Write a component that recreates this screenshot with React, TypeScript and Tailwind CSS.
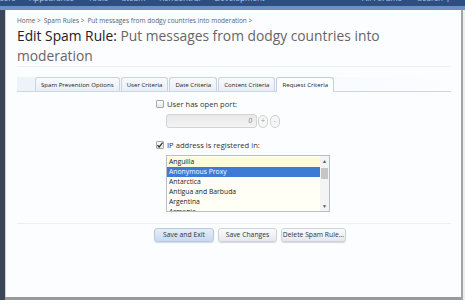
import { useState } from "react";

const navItems = ["Users", "Appearance", "Tools", "Steam", "XenCentral", "Development"];
const tabs = ["Spam Prevention Options", "User Criteria", "Date Criteria", "Content Criteria", "Request Criteria"];
const countries = ["Anguilla", "Anonymous Proxy", "Antarctica", "Antigua and Barbuda", "Argentina", "Armenia"];

export default function App() {
    const [selected, setSelected] = useState("Anonymous Proxy");

    return (
        <div className="flex h-[300px] w-[465px] flex-col overflow-hidden bg-[#e9ebee] font-['Open_Sans',sans-serif]">
            {/* admin header, mostly hidden behind the overlay */}
            <div className="h-[6px] overflow-hidden bg-[#2d4e80]">
                <div className="-mt-[7px] flex items-center text-[8px] leading-[10px] text-[#b9c8e0]">
                    <div className="-ml-[6px] flex gap-[14px]">
                        {navItems.map((item) => (
                            <span key={item}>{item}</span>
                        ))}
                    </div>
                    <div className="ml-auto mr-[14px] flex gap-[16px]">
                        <span>All Forums</span>
                        <span>Search ⚲</span>
                    </div>
                </div>
            </div>
            <div className="h-[4px] bg-[#6e90c4]" />

            <div className="flex min-h-0 flex-1">
                <div className="w-[5px] bg-[#3a4557]" />

                <div className="flex w-[456px] flex-col">
                    <div className="flex h-[287px] flex-col border-l border-[#cdd2da] bg-[#fcfdff] pl-[11px] pr-[10px]">
                        <div className="mt-[6px] flex gap-[3px] text-[6.5px] leading-[9px] text-[#5a6270]">
                            <span>Home &gt;</span>
                            <span>Spam Rules &gt;</span>
                            <span>Put messages from dodgy countries into moderation &gt;</span>
                        </div>
                        <h1 className="mt-[1px] text-[13.8px] leading-[20px] text-[#666]">
                            <span className="text-[#222]">Edit Spam Rule:</span> Put messages from dodgy countries into moderation
                        </h1>
                        <div className="h-px bg-[#eceef2]" />

                        {/* tab strip */}
                        <div className="mt-[10px] flex border-b border-[#cbd6e4] bg-gradient-to-r from-[#eef3fa] to-transparent pl-[18px]">
                            {tabs.map((tab) => {
                                const active = tab === "Request Criteria";
                                return (
                                    <div
                                        key={tab}
                                        className={
                                            active
                                                ? "-mb-px mr-px rounded-t-[3px] border border-b-0 border-[#c3cfdf] bg-[#fcfdff] px-[5px] text-[6.1px] leading-[13px] text-[#222]"
                                                : "mr-px rounded-t-[3px] border border-b-0 border-[#c9d4e2] bg-gradient-to-b from-[#f8fafd] to-[#e9eef6] px-[5px] text-[6.1px] leading-[13px] text-[#222]"
                                        }
                                    >
                                        {tab}
                                    </div>
                                );
                            })}
                        </div>

                        {/* form */}
                        <div className="ml-[139px] mt-[6px] flex flex-col text-[#333]">
                            <label className="flex items-center gap-[2px] text-[7.6px] leading-[12px]">
                                <span className="h-[8px] w-[8px] rounded-[1px] border border-[#a8a8a8] bg-gradient-to-b from-[#fff] to-[#e6e6e6]" />
                                <span className="ml-[1px]">User has open port:</span>
                            </label>
                            <div className="ml-[10px] mt-[4px] flex items-center gap-[1px]">
                                <div className="flex h-[14px] w-[91px] items-center justify-end rounded-[3px] border border-[#d3d3d3] bg-gradient-to-b from-[#e8e8e8] to-[#f4f4f4] pr-[4px] text-[7px] italic text-[#888]">
                                    0
                                </div>
                                <div className="flex h-[13px] w-[10px] items-center justify-center rounded-[5px] border border-[#cfcfcf] bg-[#f6f6f6] text-[7px] text-[#999]">
                                    +
                                </div>
                                <div className="ml-[1px] flex h-[13px] w-[10px] items-center justify-center rounded-[5px] border border-[#cfcfcf] bg-[#f6f6f6] text-[7px] text-[#999]">
                                    -
                                </div>
                            </div>

                            <label className="mt-[11px] flex items-center gap-[2px] text-[7.6px] leading-[12px]">
                                <span className="relative h-[8px] w-[8px] rounded-[1px] border border-[#a8a8a8] bg-gradient-to-b from-[#fff] to-[#e6e6e6]">
                                    <svg viewBox="0 0 8 8" className="absolute -left-px -top-px h-[8px] w-[8px]">
                                        <path d="M1.5 4.2 L3.2 6 L6.6 1.6" fill="none" stroke="#333" strokeWidth="1.3" />
                                    </svg>
                                </span>
                                <span className="ml-[1px]">IP address is registered in:</span>
                            </label>

                            <div className="ml-[10px] mt-[4px] flex h-[57px] w-[164px] overflow-hidden border border-[#b9bec6] bg-[#fffff6]">
                                <div className="flex-1 overflow-hidden pt-px">
                                    {countries.map((country) => (
                                        <div
                                            key={country}
                                            onClick={() => setSelected(country)}
                                            className={
                                                country === selected
                                                    ? "bg-[#3d7bd6] pl-[2px] text-[6.8px] leading-[10px] text-white"
                                                    : country === "Anguilla"
                                                      ? "bg-[#fdfbdc] pl-[2px] text-[6.8px] leading-[10px] text-[#222]"
                                                      : "pl-[2px] text-[6.8px] leading-[10px] text-[#222]"
                                            }
                                        >
                                            {country}
                                        </div>
                                    ))}
                                </div>
                                <div className="flex w-[9px] flex-col items-center bg-[#f4f4f4]">
                                    <span className="mt-[2px] text-[5px] leading-[6px] text-[#555]">▲</span>
                                    <div className="mt-[4px] h-[11px] w-[7px] bg-[#c6c6c6]" />
                                    <span className="mb-[2px] mt-auto text-[5px] leading-[6px] text-[#555]">▼</span>
                                </div>
                            </div>
                        </div>

                        <div className="mt-[11px] h-px bg-[#eceef2]" />

                        <div className="ml-[137px] mt-[4px] flex gap-[4px] text-[6.8px] text-[#333]">
                            <button className="h-[14px] w-[60px] rounded-[3px] border border-[#b9c9de] bg-gradient-to-b from-[#e6eef9] to-[#c9d9ef] shadow-[0_1px_1px_rgba(0,0,0,0.15)]">
                                Save and Exit
                            </button>
                            <button className="h-[14px] w-[59px] rounded-[3px] border border-[#cdd3dc] bg-gradient-to-b from-[#fbfbfc] to-[#e5e8ed] shadow-[0_1px_1px_rgba(0,0,0,0.15)]">
                                Save Changes
                            </button>
                            <button className="h-[14px] w-[65px] rounded-[3px] border border-[#cdd3dc] bg-gradient-to-b from-[#fbfbfc] to-[#e5e8ed] shadow-[0_1px_1px_rgba(0,0,0,0.15)]">
                                Delete Spam Rule...
                            </button>
                        </div>
                    </div>
                    <div className="flex-1 bg-[#9a9a9a]" />
                </div>

                <div className="w-[2px] bg-[#a3a3a3]" />
                <div className="flex-1 bg-[#eceef1]" />
            </div>
        </div>
    );
}
